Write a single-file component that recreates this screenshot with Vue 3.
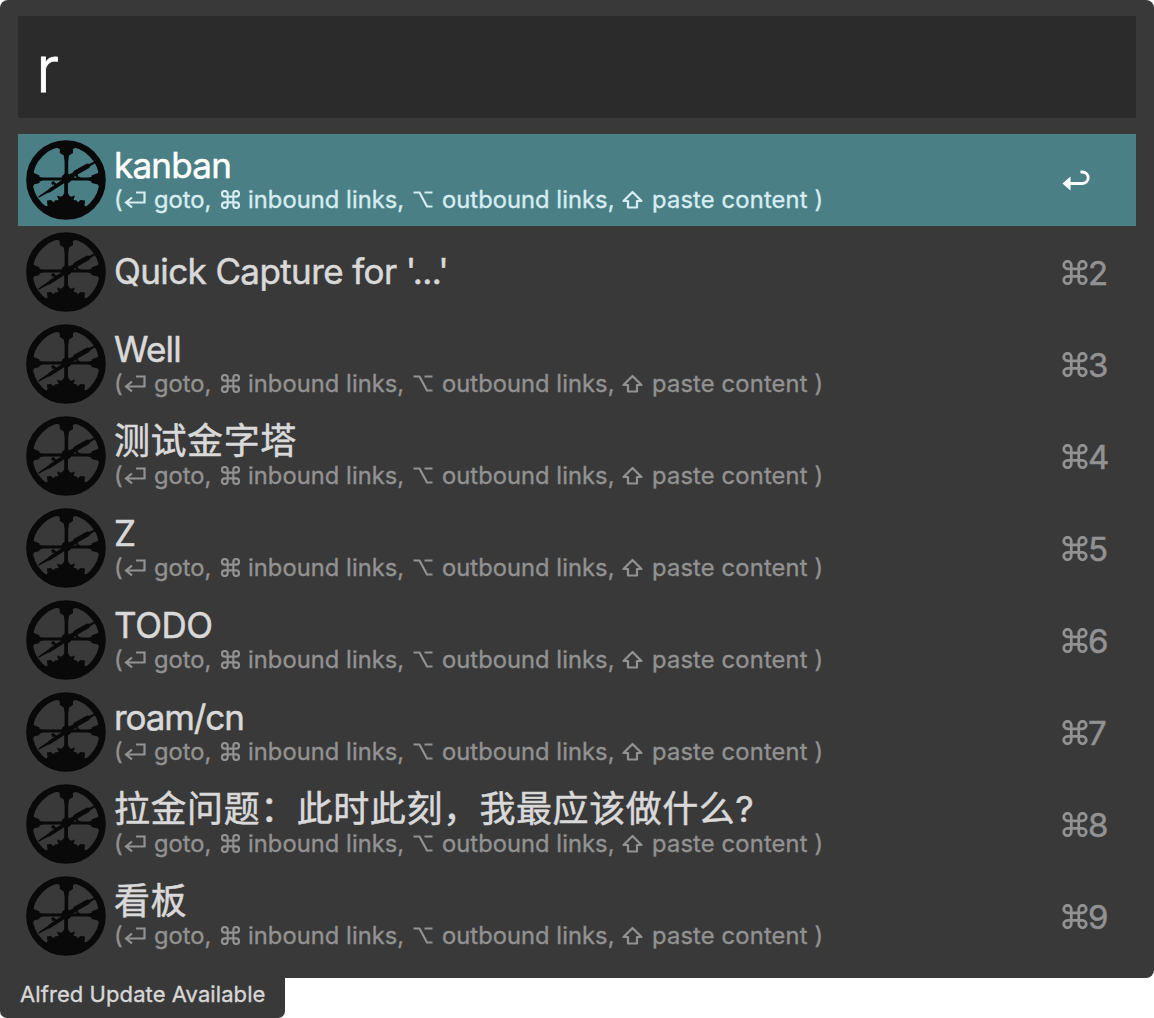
<script setup>
const rows = [
  { title: 'kanban', kind: 'kanban', hint: true, key: '' },
  { title: "Quick Capture for '...'", kind: 'quick', hint: false, key: '2' },
  { title: 'Well', kind: 'well', hint: true, key: '3' },
  { title: '测试金字塔', kind: 'cjk', hint: true, key: '4' },
  { title: 'Z', kind: 'zed', hint: true, key: '5' },
  { title: 'TODO', kind: 'todo', hint: true, key: '6' },
  { title: 'roam/cn', kind: 'roam', hint: true, key: '7' },
  { title: '拉金问题：此时此刻，我最应该做什么?', kind: 'cjk', hint: true, key: '8' },
  { title: '看板', kind: 'cjk', hint: true, key: '9' },
]
</script>

<template>
  <svg class="defs" aria-hidden="true">
    <symbol id="roam" viewBox="0 0 80 80">
      <circle cx="40" cy="40" r="36.600" fill="none" stroke="currentColor" stroke-width="6.400" />
      <g fill="currentColor">
        <circle cx="40.500" cy="38.500" r="5" />
        <path d="M27 6h27l-7 3v4l-4 2.500-.8 6V38h-3.600V21.500l-.8-6-4-2.500V9z" />
        <path d="M6 29l2 4 5.500 2.500V37L17 37.600h21v3H17l-3.500 1V43L8 44.500 6 49zM74 29l-2 4-6.500 2.500V37L62 37.600H42v3h20l3.500 1V43l6.500 1.500 2 4.500z" />
        <path d="M38.200 40h3.800v13l1.800 4h-7.600l2-4z" />
        <path d="M12.300 56.500l9.700-6.700 3-2.500 11-7.300 7-5.500 4-2 1-1.800 13-7.200 2 .5 6.500-3 .7 1.500-6 3.800-1 1.800-12.500 7-7.500 6-5.500 2.500-14 9-1.700.2-9.200 5z" />
        <path d="M25 42.500l2.500-1.500 4 4-1.500 1.200-2.500-2-1 1zM49 35l2.500-1 1 3 1.500-.2.500 1.500-3 1z" />
        <path d="M31 55.500l4 1.200 2-1.200h6l2 1.200 4-1.200-1.500 4.500 3.500.5.500 2 3-2.500 4.500.5-.5 5.500 4 .5-1 3.500Q54 79 40 79T18.500 70l-1-3.500 4-.5-.5-5.500 4-.5 3 2.500.5-2 4-.5z" />
      </g>
    </symbol>
    <symbol id="command" viewBox="0 0 20 20">
      <path d="M7 13V4a3 3 0 1 0-3 3h12a3 3 0 1 0-3-3v12a3 3 0 1 0 3-3H4a3 3 0 1 0 3 3z" fill="none" stroke="currentColor" stroke-width="2.200" />
    </symbol>
  </svg>

  <main class="alfred">
    <section class="panel">
      <div class="query"><span>r</span></div>
      <ul class="results">
        <li v-for="(row, i) in rows" :key="row.title" class="row" :class="{ selected: i === 0 }">
          <svg class="avatar"><use href="#roam" /></svg>
          <div class="content">
            <div class="title" :class="[row.kind, { single: !row.hint }]">{{ row.title }}</div>
            <div v-if="row.hint" class="hint">
              <span class="paren">(</span>
              <svg width="22" height="20" viewBox="0 0 22 20"><path d="M12 2.500h8.500v10H3M8 7.500l-6 5 6 4.800" /></svg>
              <span class="goto">goto,</span>
              <svg class="cmd" width="21" height="19"><use href="#command" /></svg>
              <span class="inbound">inbound links,</span>
              <svg width="20" height="20" viewBox="0 0 20 20"><path d="M.5 2.500h6L14 16.500h5.500M11.500 2.500h8" /></svg>
              <span class="outbound">outbound links,</span>
              <svg width="22" height="20" viewBox="0 0 22 20"><path d="M10.500 2L1.500 11h4.500v6.500h9V11h4.500z" stroke-linejoin="round" /></svg>
              <span class="paste">paste content )</span>
            </div>
          </div>
          <div class="shortcut">
            <template v-if="row.key">
              <svg width="26" height="25"><use href="#command" /></svg><span>{{ row.key }}</span>
            </template>
            <svg v-else class="return" width="28" height="24" viewBox="0 0 28 24">
              <path d="M18.500 3h2a5.600 5.600 0 0 1 0 11.500H7" fill="none" stroke="currentColor" stroke-width="2.800" />
              <path d="M.5 14.500l8-7v14z" fill="currentColor" />
            </svg>
          </div>
        </li>
      </ul>
    </section>
    <footer class="update">Alfred Update Available</footer>
  </main>
</template>

<style>
body { background: #fff; overflow: hidden; }
</style>

<style scoped>
.defs { position: absolute; width: 0; height: 0; }
.alfred { width: 1154px; height: 1018px; font-family: Inter, "Noto Sans CJK SC", sans-serif; }
.panel { box-sizing: border-box; height: 978px; padding: 16px 18px; background: #393939; border-radius: 8px 8px 8px 0; }
.query { box-sizing: border-box; height: 102px; padding: 15px 18px; background: #2b2b2b; border-radius: 2px; color: #fff; font-size: 64px; line-height: 76px; font-weight: 300; -webkit-text-stroke: .8px currentColor; }
.results { margin: 16px 0 0; padding: 0; list-style: none; }
.row { display: flex; height: 92px; box-sizing: border-box; padding-left: 8px; color: #d9d9d9; }
.selected { background: #4b7f86; color: #fff; }
.avatar { width: 80px; height: 80px; margin-top: 6px; color: #090909; flex: none; }
.content { flex: 1; padding: 9px 0 0 8px; }
.title { height: 44px; line-height: 44px; font-size: 35px; letter-spacing: -.75px; white-space: pre; -webkit-text-stroke: .5px currentColor; }
.quick { letter-spacing: -.6px; }
.todo { letter-spacing: -.4px; }
.roam { letter-spacing: -1.1px; }
.zed { letter-spacing: 0; }
.single { margin-top: 14px; }
.cjk { line-height: 45px; font-size: 36px; letter-spacing: .55px; }
.hint { display: grid; grid-template-columns: 9px 30px 66px 28px 165px 29px 180px 30px 190px; height: 30px; margin: -2px 0 0 1px; align-items: center; color: #929292; font-size: 23.700px; line-height: 30px; white-space: nowrap; -webkit-text-stroke: .35px currentColor; }
.hint .paren { margin-left: -1px; }
.hint svg { fill: none; stroke: currentColor; stroke-width: 2.200; margin-top: -1px; }
.inbound, .outbound { letter-spacing: .06px; }
.paste { letter-spacing: .18px; }
.selected .hint { color: #d6edf1; }
.shortcut { display: flex; align-items: center; width: 74px; padding-top: 1px; color: #929292; font-size: 33px; -webkit-text-stroke: .5px currentColor; }
.selected .shortcut { padding-top: 2px; color: #fff; }
.update { box-sizing: border-box; width: 285px; height: 40px; padding-left: 20px; background: #393939; border-radius: 0 0 7px 7px; color: #d7d7d7; font-size: 22px; letter-spacing: .08px; line-height: 33px; white-space: nowrap; -webkit-text-stroke: .35px currentColor; }
</style>
